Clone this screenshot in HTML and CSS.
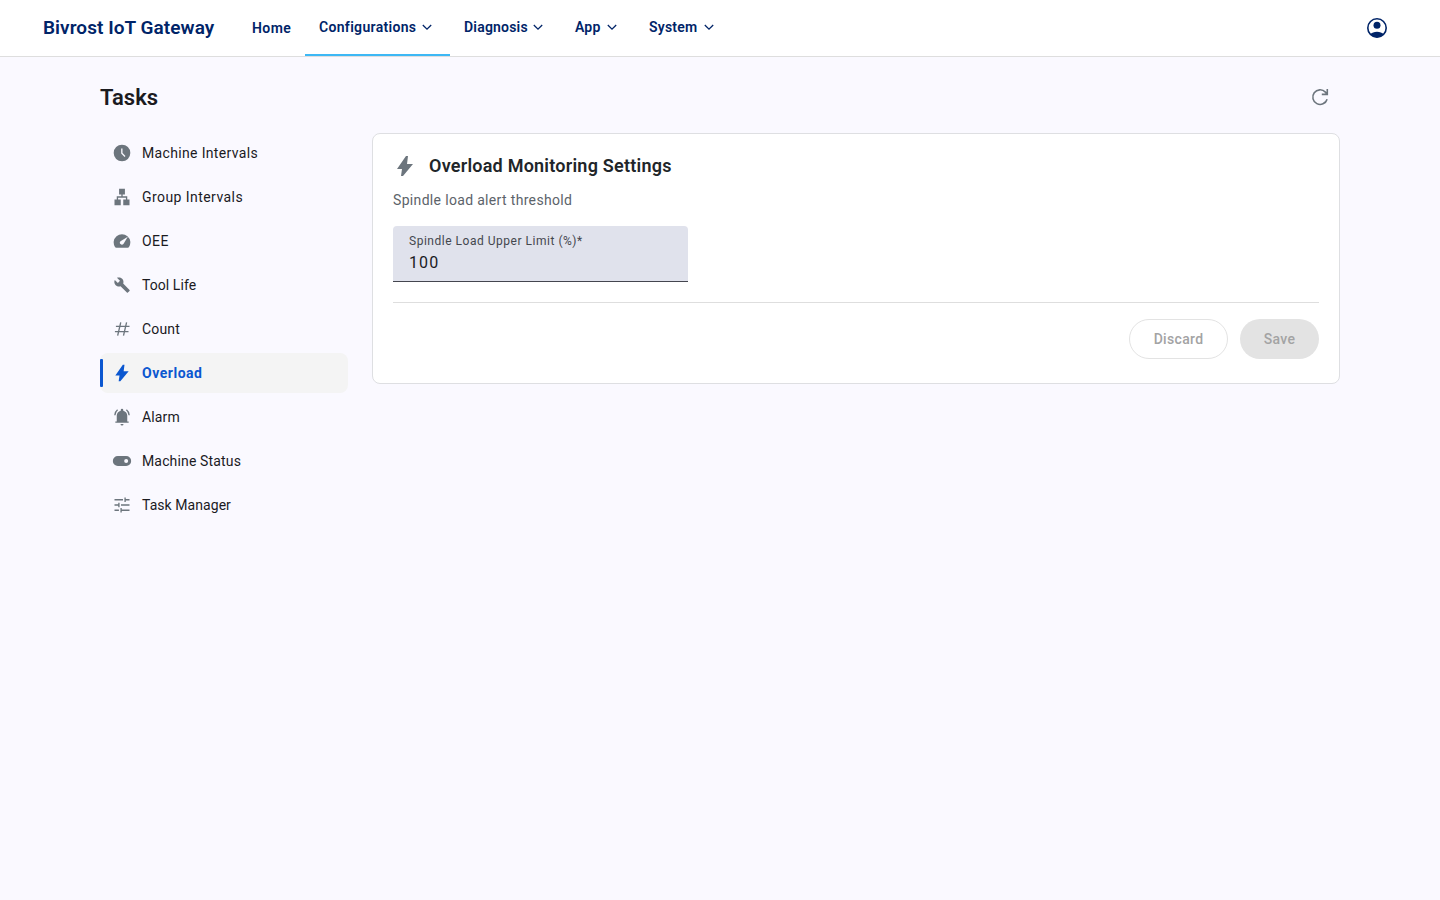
FILE: index.html
```html
<!DOCTYPE html>
<html lang="en">
<head>
  <meta charset="UTF-8">
  <meta name="viewport" content="width=device-width, initial-scale=1.0">
  <title>Bivrost IoT Gateway - Tasks</title>
  <link rel="stylesheet" href="styles.css">
</head>
<body>
  <header class="topbar">
    <a class="brand" href="#">Bivrost IoT Gateway</a>
    <nav class="menu">
      <a class="menu-item home" href="#"><span>Home</span></a>
      <a class="menu-item configurations active" href="#"><span>Configurations</span><svg class="chevron" viewBox="0 0 12 12"><path d="M1.8 4 6 8.2 10.2 4"/></svg></a>
      <a class="menu-item diagnosis" href="#"><span>Diagnosis</span><svg class="chevron" viewBox="0 0 12 12"><path d="M1.8 4 6 8.2 10.2 4"/></svg></a>
      <a class="menu-item app" href="#"><span>App</span><svg class="chevron" viewBox="0 0 12 12"><path d="M1.8 4 6 8.2 10.2 4"/></svg></a>
      <a class="menu-item system" href="#"><span>System</span><svg class="chevron" viewBox="0 0 12 12"><path d="M1.8 4 6 8.2 10.2 4"/></svg></a>
    </nav>
    <button class="icon-button account" aria-label="Account">
      <svg viewBox="0 0 24 24">
        <circle class="line" cx="12" cy="12" r="9.2"/>
        <circle cx="12" cy="9.3" r="3.5"/>
        <path d="M5 18.2c1.8-1.5 4.3-2.4 7-2.4s5.2.9 7 2.4a9.6 9.6 0 0 1-14 0z"/>
      </svg>
    </button>
  </header>

  <main class="page">
    <div class="page-head">
      <h1>Tasks</h1>
      <button class="icon-button refresh" aria-label="Refresh">
        <svg viewBox="0 0 24 24"><path class="line" d="M19.1 14.2a7.3 7.3 0 1 1-1.7-7.1l1.9 2M19.3 4v5.4h-5.500"/></svg>
      </button>
    </div>

    <div class="content">
      <aside class="sidebar">
        <a class="side-item machine-intervals" href="#">
          <svg viewBox="0 0 24 24"><circle cx="12" cy="12" r="10"/><path class="cut" d="M11.8 6.5v5.800l3.800 3.800"/></svg>
          <span>Machine Intervals</span>
        </a>
        <a class="side-item group-intervals" href="#">
          <svg viewBox="0 0 24 24"><path d="M13.500 22H21v-7h-2.700v-3.800h-5.500V9h2.700V2h-7v7h2.700v2.200H5.700V15H3v7h7.500v-7H7.300v-2.200h9.400V15h-3.200z"/></svg>
          <span>Group Intervals</span>
        </a>
        <a class="side-item oee" href="#">
          <svg viewBox="0 0 24 24"><path fill-rule="evenodd" d="M5.100 20c-.7 0-1.200-.2-1.500-.8a10 10 0 1 1 16.800 0c-.3.600-.8.800-1.500.8zM10.200 15.700a2.500 2.500 0 0 0 3.500 0L19 7l-8.800 5.200a2.500 2.500 0 0 0 0 3.500z"/></svg>
          <span>OEE</span>
        </a>
        <a class="side-item tool-life" href="#">
          <svg viewBox="0 0 24 24"><path transform="translate(2 2) scale(.84)" d="M22.700 19l-9.100-9.100c.9-2.300.4-5-1.500-6.900-2-2-5-2.400-7.400-1.300L9 6 6 9 1.600 4.700C.4 7.100.9 10.100 2.900 12.100c1.900 1.900 4.600 2.400 6.900 1.500l9.100 9.100c.4.400 1 .400 1.400 0l2.300-2.300c.5-.4.5-1.100.1-1.400z"/></svg>
          <span>Tool Life</span>
        </a>
        <a class="side-item count" href="#">
          <svg viewBox="0 0 24 24"><path class="line" d="M10.500 4 6.800 20M17.500 4l-3.700 16M4.700 8.800H21M3.500 15.200h16.300"/></svg>
          <span>Count</span>
        </a>
        <a class="side-item overload active" href="#">
          <svg viewBox="0 0 24 24"><path d="M8 22l1-7H4l9-13h2l-1 8h6L10 22z"/></svg>
          <span>Overload</span>
        </a>
        <a class="side-item alarm" href="#">
          <svg viewBox="0 0 24 24"><path d="M4 19v-1.500h1.700v-7.200c0-2.900 1.900-5.100 4.800-5.800V3.500a1.500 1.500 0 0 1 3 0v1c2.900.7 4.800 2.900 4.800 5.800v7.200H20V19zM10.200 20.300h3.600a1.800 1.800 0 0 1-3.600 0z"/><path class="line" d="M3.400 9.800c.1-2.500 1.300-4.900 3.300-6.500M20.600 9.800c-.1-2.500-1.300-4.900-3.300-6.500"/></svg>
          <span>Alarm</span>
        </a>
        <a class="side-item machine-status" href="#">
          <svg viewBox="0 0 24 24"><path fill-rule="evenodd" d="M7 6h10a6 6 0 0 1 0 12H7A6 6 0 0 1 7 6zm10 3.600a2.400 2.400 0 1 0 0 4.800 2.400 2.400 0 0 0 0-4.800z"/></svg>
          <span>Machine Status</span>
        </a>
        <a class="side-item task-manager" href="#">
          <svg viewBox="0 0 24 24"><path class="line" d="M3 5.700h10.200M15.700 3v5.400M15.700 5.700H21M3 12h5.300M8.300 9.300v5.400M10.800 12H21M3 18.300h5.300M10.900 15.600V21M10.900 18.300H21"/></svg>
          <span>Task Manager</span>
        </a>
      </aside>

      <section class="card">
        <div class="card-title">
          <svg viewBox="0 0 24 24"><path d="M8 22l1-7H4l9-13h2l-1 8h6L10 22z"/></svg>
          <h2>Overload Monitoring Settings</h2>
        </div>
        <p class="description">Spindle load alert threshold</p>
        <label class="field">
          <span class="field-label">Spindle Load Upper Limit (%)*</span>
          <input type="text" value="100">
        </label>
        <div class="actions">
          <button class="btn discard" disabled>Discard</button>
          <button class="btn save" disabled>Save</button>
        </div>
      </section>
    </div>
  </main>
</body>
</html>
```

FILE: styles.css
```css
* {
  box-sizing: border-box;
}
body {
  margin: 0;
  min-height: 100vh;
  background-color: #faf9ff;
  color: #1b1b1f;
  font-family: Roboto, "Noto Sans", sans-serif;
  font-size: 14px;
}
a {
  color: inherit;
  text-decoration: none;
}
h1, h2, p {
  margin: 0;
}
svg {
  display: block;
  flex: none;
  fill: currentColor;
}
.line {
  fill: none;
  stroke: currentColor;
  stroke-width: 1.6;
}

/* top bar */
.topbar {
  display: flex;
  align-items: center;
  height: 57px;
  padding: 0 43px;
  background-color: #fff;
  border-bottom: 1px solid #dedede;
  color: #002468;
}
.brand {
  width: 195px;
  padding-bottom: 2px;
  font-size: 19px;
  font-weight: 600;
  letter-spacing: .06px;
  white-space: nowrap;
}
.menu {
  display: flex;
  height: 56px;
}
.menu-item {
  display: flex;
  align-items: center;
  justify-content: space-between;
  padding: 0 17px 0 14px;
  border-bottom: 2px solid transparent;
  font-weight: 600;
  letter-spacing: .2px;
  white-space: nowrap;
}
.home {
  width: 67px;
  padding-top: 2px;
  letter-spacing: .4px;
}
.configurations {
  width: 145px;
  letter-spacing: .32px;
}
.diagnosis {
  width: 111px;
}
.app {
  width: 74px;
}
.system {
  width: 97px;
}
.menu-item.active {
  border-bottom-color: #3db8f5;
}
.chevron {
  width: 12px;
  height: 12px;
  fill: none;
  stroke: currentColor;
  stroke-width: 1.3;
}
.icon-button {
  display: flex;
  align-items: center;
  justify-content: center;
  width: 40px;
  height: 40px;
  padding: 0;
  border: none;
  background: none;
  color: #6c757d;
}
.icon-button svg {
  width: 24px;
  height: 24px;
}
.account {
  margin-left: auto;
  color: #002468;
}

/* page */
.page {
  width: 1240px;
  margin: 0 auto;
  padding-top: 20px;
}
.page-head {
  display: flex;
  align-items: center;
  justify-content: space-between;
  height: 40px;
  margin-bottom: 16px;
}
h1 {
  font-size: 22px;
  font-weight: 600;
}
.content {
  display: grid;
  grid-template-columns: 248px 1fr;
  gap: 24px;
  align-items: start;
}

/* sidebar */
.sidebar {
  display: flex;
  flex-direction: column;
  gap: 4px;
}
.side-item {
  position: relative;
  display: flex;
  align-items: center;
  gap: 10px;
  height: 40px;
  padding-left: 12px;
  border-radius: 8px;
  letter-spacing: .15px;
}
.machine-intervals {
  letter-spacing: .34px;
}
.group-intervals {
  letter-spacing: .44px;
}
.oee {
  letter-spacing: .4px;
}
.tool-life, .task-manager {
  letter-spacing: .06px;
}
.overload {
  letter-spacing: .52px;
}
.side-item svg {
  width: 20px;
  height: 20px;
  color: #6c757d;
}
.cut {
  fill: none;
  stroke: #faf9ff;
  stroke-width: 1.6;
}
.side-item.active {
  background-color: #f4f4f4;
  color: #0b57d0;
  font-weight: 700;
}
.side-item.active svg {
  color: #0b57d0;
}
.side-item.active::before {
  content: "";
  position: absolute;
  left: 0;
  top: 6px;
  width: 3px;
  height: 28px;
  background-color: #0b57d0;
  border-radius: 1px;
}

/* settings card */
.card {
  height: 251px;
  padding: 20px;
  background-color: #fff;
  border: 1px solid #dedfe2;
  border-radius: 8px;
}
.card-title {
  display: flex;
  align-items: center;
  gap: 12px;
  height: 24px;
}
.card-title svg {
  width: 24px;
  height: 24px;
  color: #6c757d;
}
h2 {
  padding-bottom: 2px;
  color: #212529;
  font-size: 18px;
  font-weight: 600;
  letter-spacing: .23px;
}
.description {
  margin: 12px 0 16px;
  color: #5c636a;
  line-height: 20px;
  letter-spacing: .33px;
}
.field {
  display: flex;
  flex-direction: column;
  width: 295px;
  height: 56px;
  padding: 7px 16px 0;
  background-color: #e0e2ec;
  border-bottom: 1px solid #44464f;
  border-radius: 4px 4px 0 0;
}
.field-label {
  color: #44474e;
  font-size: 12px;
  line-height: 16px;
  letter-spacing: .52px;
}
.field input {
  width: 100%;
  height: 24px;
  margin-top: 2px;
  padding: 0;
  border: none;
  outline: none;
  background: none;
  color: #1b1b1f;
  font: 16px/24px Roboto, "Noto Sans", sans-serif;
  letter-spacing: 1.1px;
}
.actions {
  display: flex;
  justify-content: flex-end;
  gap: 12px;
  margin-top: 20px;
  padding-top: 16px;
  border-top: 1px solid #dedede;
}
.btn {
  height: 40px;
  border-radius: 20px;
  font: 500 14px Roboto, "Noto Sans", sans-serif;
  letter-spacing: .32px;
  color: #a3a3a4;
}
.discard {
  width: 99px;
  border: 1px solid #e3e3e3;
  background-color: #fff;
}
.save {
  width: 79px;
  border: none;
  background-color: #e3e3e3;
}
```
